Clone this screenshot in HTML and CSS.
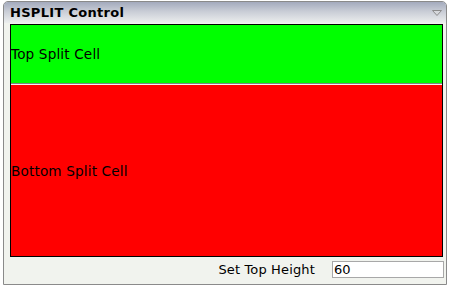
FILE: index.html
```html
<!doctype html>
<html lang="en">

<head>
  <meta charset="utf-8" />
  <meta name="viewport" content="width=device-width, initial-scale=1">
  <title>HSPLIT Control</title>
  <link rel="stylesheet" href="styles.css">
</head>

<body>
  <div class="panel">
    <div class="panel-header">
      <span class="panel-title">HSPLIT Control</span>
      <svg class="panel-toggle" width="10" height="6" viewBox="0 0 10 6">
        <polygon points="0.5,0.5 9.5,0.5 5,5.5" fill="#d6d8dc" stroke="#8c8c8c" stroke-width="1" />
      </svg>
    </div>

    <div class="panel-body">
      <div class="hsplit">
        <div class="split-cell top-cell">Top Split Cell</div>
        <div class="splitter"></div>
        <div class="split-cell bottom-cell">Bottom Split Cell</div>
      </div>

      <div class="controls">
        <label for="top-height">Set Top Height</label>
        <input id="top-height" value="60">
      </div>
    </div>
  </div>
</body>

</html>
```

FILE: styles.css
```css
html,
body {
  margin: 0;
  background: #ffffff;
}

body {
  font-family: "DejaVu Sans", Verdana, sans-serif;
  font-size: 13px;
  color: #000;
}

.panel {
  width: 444px;
  height: 284px;
  box-sizing: border-box;
  margin: 1px 0 0 3px;
  border: 1px solid #8a8a8a;
  border-radius: 5px 5px 0 0;
  background: #f1f3ee;
  display: flex;
  flex-direction: column;
}

.panel-header {
  height: 21px;
  display: flex;
  align-items: center;
  justify-content: space-between;
  padding: 0 4px 0 6px;
  border-radius: 4px 4px 0 0;
  background: linear-gradient(to bottom, #a3aabd 0%, #c9cdd6 45%, #eceeee 100%);
}

.panel-title {
  font-weight: bold;
  font-size: 13px;
  letter-spacing: 0.3px;
  margin-top: -1px;
}

.panel-toggle {
  display: block;
  margin-top: 1px;
}

.panel-body {
  flex: 1;
  display: flex;
  flex-direction: column;
  padding: 1px 3px 0 6px;
}

.hsplit {
  width: 433px;
  height: 233px;
  box-sizing: border-box;
  border: 1px solid #000;
  display: flex;
  flex-direction: column;
}

.split-cell {
  display: flex;
  align-items: center;
  font-size: 13.6px;
  letter-spacing: 0.15px;
}

.top-cell {
  height: 58px;
  background: #00ff00;
}

.splitter {
  height: 1px;
  border-top: 1px solid #808080;
  background: #f4f4f4;
}

.bottom-cell {
  flex: 1;
  background: #ff0000;
}

.controls {
  display: flex;
  justify-content: flex-end;
  align-items: center;
  gap: 17px;
  margin-top: 4px;
}

.controls label {
  letter-spacing: 0.15px;
}

.controls input {
  width: 112px;
  height: 17px;
  box-sizing: border-box;
  border: 1px solid #a8a8a8;
  padding: 0 1px;
  margin: 0 -1px 0 0;
  font-family: "DejaVu Sans", Verdana, sans-serif;
  font-size: 13px;
  outline: none;
  background: #fff;
}
```
